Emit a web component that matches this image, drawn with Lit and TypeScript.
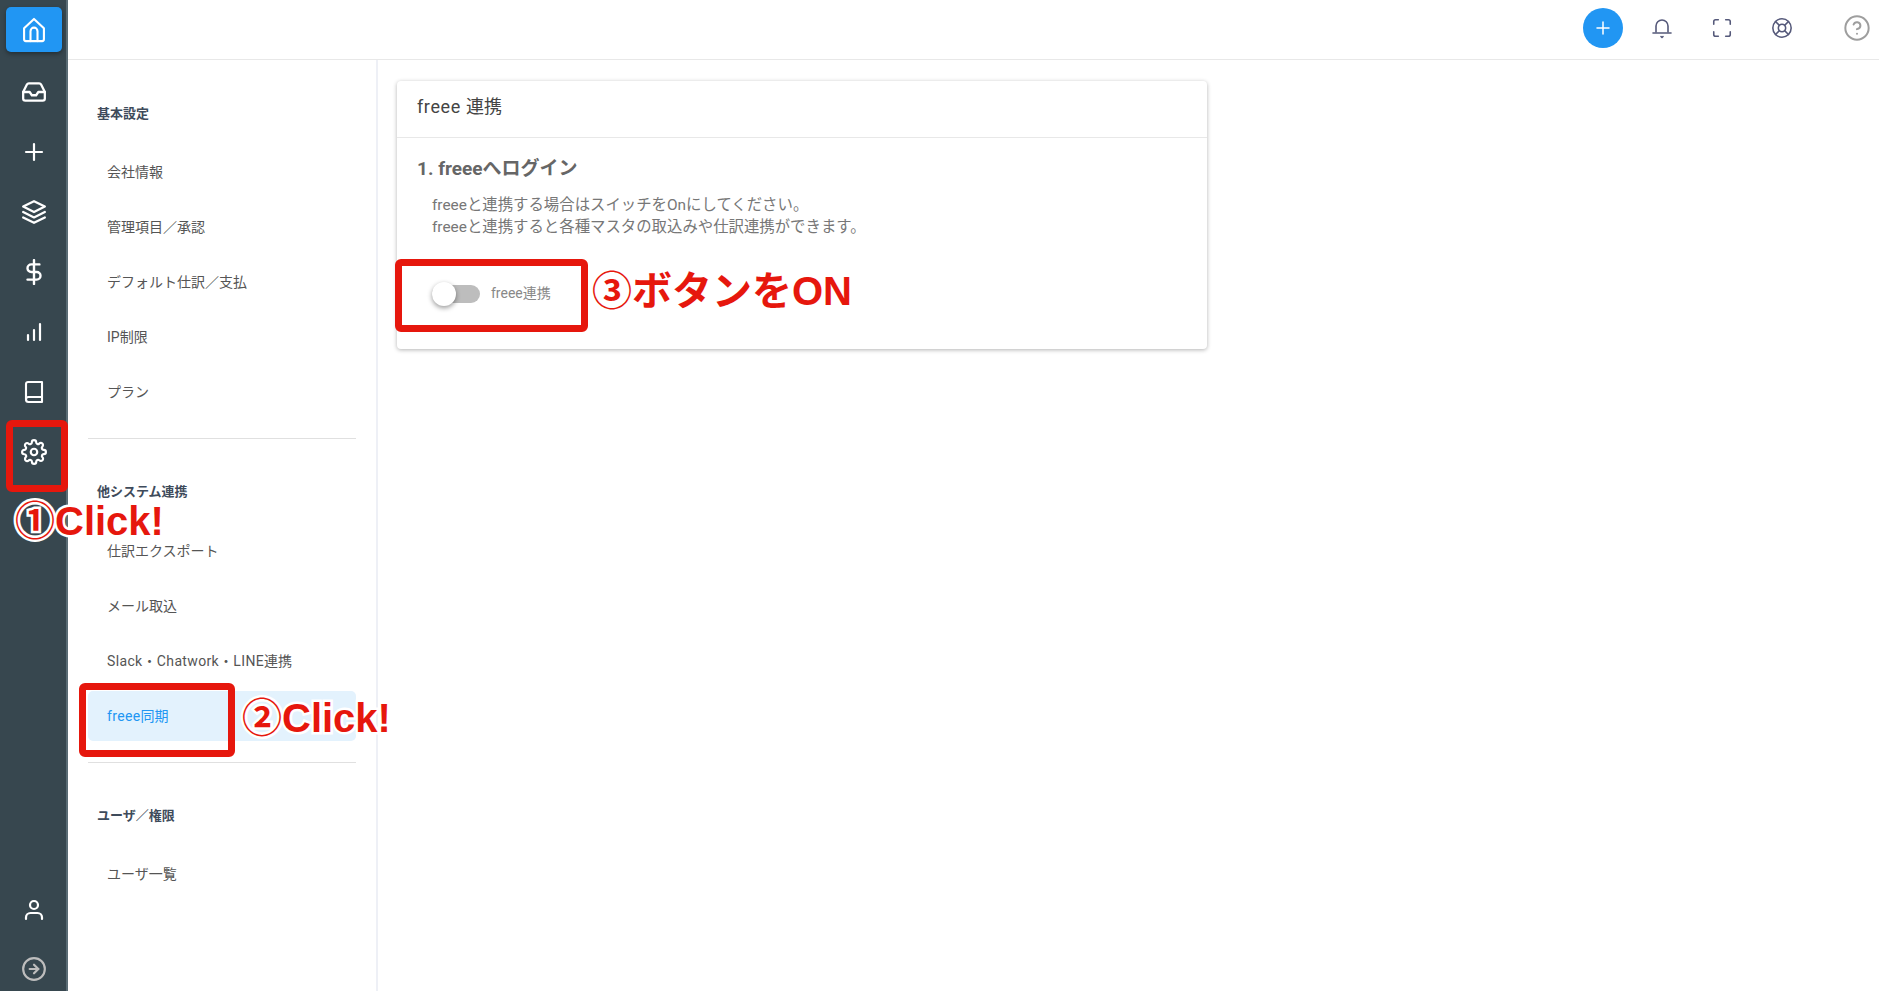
import { LitElement, html, css, svg } from "lit";
import { customElement } from "lit/decorators.js";

const icon = (body: unknown, size = 24, sw = 2) =>
  html`<svg width=${size} height=${size} viewBox="0 0 24 24" fill="none" stroke="currentColor" stroke-width=${sw} stroke-linecap="round" stroke-linejoin="round">${body}</svg>`;

const I = {
  home: svg`<path d="M3.5 10.5 12 2.500l8.500 8V20a1.500 1.500 0 0 1-1.500 1.500H5A1.500 1.500 0 0 1 3.500 20z"/><path d="M9 21.500V13a3 3 0 0 1 6 0v8.500"/>`,
  inbox: svg`<polyline points="22 12 16 12 14 15 10 15 8 12 2 12"/><path d="M5.45 5.11L2 12v6a2 2 0 0 0 2 2h16a2 2 0 0 0 2-2v-6l-3.45-6.89A2 2 0 0 0 16.76 4H7.24a2 2 0 0 0-1.79 1.11z"/>`,
  plus: svg`<line x1="12" y1="4" x2="12" y2="20"/><line x1="4" y1="12" x2="20" y2="12"/>`,
  layers: svg`<polygon points="12 2 2 7 12 12 22 7 12 2"/><polyline points="2 17 12 22 22 17"/><polyline points="2 12 12 17 22 12"/>`,
  dollar: svg`<line x1="12" y1="1" x2="12" y2="23"/><path d="M17 5H9.5a3.5 3.5 0 0 0 0 7h5a3.5 3.5 0 0 1 0 7H6"/>`,
  chart: svg`<line x1="18" y1="20" x2="18" y2="4"/><line x1="12" y1="20" x2="12" y2="10"/><line x1="6" y1="20" x2="6" y2="15"/>`,
  book: svg`<path d="M4 19.5V4a2 2 0 0 1 2-2h14v20H6.5A2.5 2.5 0 0 1 4 19.5z"/><path d="M4 19.5A2.5 2.5 0 0 1 6.5 17H20"/>`,
  gear: svg`<circle cx="12" cy="12" r="3"/><path d="M19.4 15a1.65 1.65 0 0 0 .33 1.82l.06.06a2 2 0 0 1 0 2.83 2 2 0 0 1-2.83 0l-.06-.06a1.65 1.65 0 0 0-1.82-.33 1.65 1.65 0 0 0-1 1.51V21a2 2 0 0 1-2 2 2 2 0 0 1-2-2v-.09A1.65 1.65 0 0 0 9 19.4a1.65 1.65 0 0 0-1.82.33l-.06.06a2 2 0 0 1-2.83 0 2 2 0 0 1 0-2.83l.06-.06a1.65 1.65 0 0 0 .33-1.82 1.65 1.65 0 0 0-1.51-1H3a2 2 0 0 1-2-2 2 2 0 0 1 2-2h.09A1.65 1.65 0 0 0 4.6 9a1.65 1.65 0 0 0-.33-1.82l-.06-.06a2 2 0 0 1 0-2.83 2 2 0 0 1 2.83 0l.06.06a1.65 1.65 0 0 0 1.82.33H9a1.65 1.65 0 0 0 1-1.51V3a2 2 0 0 1 2-2 2 2 0 0 1 2 2v.09a1.65 1.65 0 0 0 1 1.51 1.65 1.65 0 0 0 1.82-.33l.06-.06a2 2 0 0 1 2.83 0 2 2 0 0 1 0 2.83l-.06.06a1.65 1.65 0 0 0-.33 1.82V9a1.65 1.65 0 0 0 1.51 1H21a2 2 0 0 1 2 2 2 2 0 0 1-2 2h-.09a1.65 1.65 0 0 0-1.51 1z"/>`,
  user: svg`<circle cx="12" cy="7" r="4"/><path d="M4 21v-1.5A4.5 4.5 0 0 1 8.5 15h7a4.5 4.5 0 0 1 4.500 4.500V21"/>`,
  arrow: svg`<circle cx="12" cy="12" r="10"/><polyline points="12 16 16 12 12 8"/><line x1="8" y1="12" x2="16" y2="12"/>`,
  bell: svg`<path d="M18 16V10a6 6 0 0 0-12 0v6"/><line x1="3" y1="17" x2="21" y2="17"/><path d="M11 20.500 12 21.500l1-1"/>`,
  full: svg`<path d="M8 3H5a2 2 0 0 0-2 2v3"/><path d="M21 8V5a2 2 0 0 0-2-2h-3"/><path d="M3 16v3a2 2 0 0 0 2 2h3"/><path d="M16 21h3a2 2 0 0 0 2-2v-3"/>`,
  buoy: svg`<circle cx="12" cy="12" r="10"/><circle cx="12" cy="12" r="4"/><line x1="4.93" y1="4.93" x2="9.17" y2="9.17"/><line x1="14.83" y1="14.83" x2="19.07" y2="19.07"/><line x1="14.83" y1="9.17" x2="19.07" y2="4.93"/><line x1="4.93" y1="19.07" x2="9.17" y2="14.83"/>`,
  help: svg`<circle cx="12" cy="12" r="10"/><path d="M9.09 9a3 3 0 0 1 5.83 1c0 2-3 3-3 3"/><line x1="12" y1="17" x2="12.01" y2="17"/>`,
};

@customElement("app-root")
export class AppRoot extends LitElement {
  static styles = css`
    :host {
      display: block;
      position: relative;
      width: 1879px;
      height: 991px;
      overflow: hidden;
      background: #fff;
      font-family: Roboto, "Noto Sans CJK JP", sans-serif;
      color: #3e4b5b;
    }
    .layout { display: flex; height: 100%; }
    .rail {
      width: 66px;
      flex: none;
      border-right: 2px solid #5a6c75;
      background: #37474f;
      color: #fff;
      display: flex;
      flex-direction: column;
      align-items: stretch;
    }
    .rail-item { height: 60px; display: flex; align-items: center; justify-content: center; margin-left: 2px; }
    .rail-home {
      height: 45px;
      margin: 7px 0 10px 6px;
      width: 56px;
      background: #2196f3;
      border-radius: 5px;
      box-shadow: 0 2px 4px rgba(0, 0, 0, 0.35);
    }
    .rail-spacer { flex: 1; }
    .rail-last { height: 44px; margin-top: 7px; color: #bdbdbd; }
    .content { flex: 1; display: flex; flex-direction: column; min-width: 0; }
    .topbar {
      height: 59px;
      box-sizing: content-box;
      flex: none;
      border-bottom: 1px solid #e8e8e8;
      display: flex;
      align-items: flex-start;
      justify-content: flex-end;
      color: #55597a;
      padding-right: 8px;
    }
    .top-add {
      width: 40px; height: 40px; border-radius: 50%;
      background: #2196f3; color: #fff;
      display: flex; align-items: center; justify-content: center;
      margin: 8px 27px 0 0;
    }
    .top-icon {
      width: 24px; height: 24px;
      display: flex; align-items: center; justify-content: center;
      margin: 16px 36px 0 0;
    }
    .top-help { color: #9e9e9e; width: 28px; height: 28px; margin: 14px 0 0 13px; }
    .body { flex: 1; display: flex; min-height: 0; }
    .side {
      width: 310px;
      flex: none;
      box-sizing: border-box;
      border-right: 2px solid #eef0f6;
      padding: 39px 20px 0;
    }
    .heading {
      height: 30px;
      line-height: 30px;
      margin-left: 9px;
      font-size: 13px;
      font-weight: 700;
      color: #3e4b5b;
    }
    .items { margin-top: 18px; }
    .items.second { margin-top: 19px; }
    .item {
      height: 50px;
      margin: 5px 0;
      line-height: 50px;
      padding-left: 19px;
      font-size: 14px;
      color: #555;
      border-radius: 5px;
    }
    .item.active { background: #e3f2fd; color: #2196f3; }
    .lat { letter-spacing: 0.35px; }
    .sep { height: 1px; background: #e0e0e0; margin: 21px 0 38px; }
    .main { flex: 1; padding: 21px 19px; }
    .card {
      width: 810px;
      height: 268px;
      background: #fff;
      border-radius: 4px;
      box-shadow: 0 1px 4px rgba(0, 0, 0, 0.3);
    }
    .card-head {
      height: 57px;
      box-sizing: border-box;
      border-bottom: 1px solid #e8e8e8;
      padding-left: 20px;
      line-height: 52px;
      font-size: 18px;
      color: #444;
    }
    .card-head .lat { letter-spacing: 0.6px; }
    .card-body { padding: 19px 20px; }
    .card-body h3 {
      margin: 0;
      font-size: 19px;
      line-height: 24px;
      font-weight: 700;
      color: #666;
    }
    .desc {
      margin: 13px 0 0 15px;
      font-size: 15.4px;
      line-height: 22px;
      color: #777;
    }
    .toggle { display: flex; align-items: center; margin: 44px 0 0 15px; height: 24px; }
    .track { width: 48px; height: 18px; border-radius: 9px; background: #bdbdbd; position: relative; flex: none; }
    .thumb {
      position: absolute; left: 0; top: -3px;
      width: 24px; height: 24px; border-radius: 50%;
      background: #fff;
      box-shadow: 0 2px 5px rgba(0, 0, 0, 0.4);
    }
    .toggle-label { margin: 0 0 4px 11px; font-size: 14px; color: #888; }
    .box {
      position: absolute;
      box-sizing: border-box;
      border: 7px solid #e6170d;
      border-radius: 6px;
    }
    .note {
      position: absolute;
      font-family: "Liberation Sans", "Noto Sans CJK JP", sans-serif;
      font-weight: 700;
      font-size: 40px;
      line-height: 44px;
      color: #e6170d;
      white-space: nowrap;
      -webkit-text-stroke: 5px #fff;
      paint-order: stroke fill;
    }
    .n1 { left: 15px; top: 499px; }
    .n2 { left: 242px; top: 696px; }
    .n3 { left: 592px; top: 269px; }
    .b1 { left: 6px; top: 420px; width: 62px; height: 72px; }
    .b2 { left: 79px; top: 683px; width: 156px; height: 74px; }
    .b3 { left: 395px; top: 259px; width: 193px; height: 73px; }
  `;

  render() {
    return html`
      <div class="layout">
        <nav class="rail">
          <div class="rail-item rail-home">${icon(I.home, 28, 1.8)}</div>
          <div class="rail-item">${icon(I.inbox, 26, 2.1)}</div>
          <div class="rail-item">${icon(I.plus, 24, 2.2)}</div>
          <div class="rail-item">${icon(I.layers, 26, 2.1)}</div>
          <div class="rail-item">${icon(I.dollar, 26, 2.2)}</div>
          <div class="rail-item">${icon(I.chart, 24, 2.2)}</div>
          <div class="rail-item">${icon(I.book, 24, 2.1)}</div>
          <div class="rail-item">${icon(I.gear, 26, 2)}</div>
          <div class="rail-spacer"></div>
          <div class="rail-item">${icon(I.user, 24, 2.2)}</div>
          <div class="rail-item rail-last">${icon(I.arrow, 26)}</div>
        </nav>
        <div class="content">
          <header class="topbar">
            <div class="top-add">${icon(I.plus, 18)}</div>
            <div class="top-icon">${icon(I.bell, 24, 1.6)}</div>
            <div class="top-icon">${icon(I.full, 22, 1.7)}</div>
            <div class="top-icon">${icon(I.buoy, 22, 1.7)}</div>
            <div class="top-icon top-help">${icon(I.help, 28, 1.7)}</div>
          </header>
          <div class="body">
            <aside class="side">
              <div class="heading">基本設定</div>
              <div class="items">
                <div class="item">会社情報</div>
                <div class="item">管理項目／承認</div>
                <div class="item">デフォルト仕訳／支払</div>
                <div class="item">IP制限</div>
                <div class="item">プラン</div>
              </div>
              <div class="sep"></div>
              <div class="heading">他システム連携</div>
              <div class="items second">
                <div class="item">仕訳エクスポート</div>
                <div class="item">メール取込</div>
                <div class="item"><span class="lat">Slack・Chatwork・LINE</span>連携</div>
                <div class="item active"><span class="lat">freee</span>同期</div>
              </div>
              <div class="sep"></div>
              <div class="heading">ユーザ／権限</div>
              <div class="items">
                <div class="item">ユーザ一覧</div>
              </div>
            </aside>
            <main class="main">
              <section class="card">
                <div class="card-head"><span class="lat">freee </span>連携</div>
                <div class="card-body">
                  <h3>1. freeeへログイン</h3>
                  <p class="desc">freeeと連携する場合はスイッチをOnにしてください。<br />freeeと連携すると各種マスタの取込みや仕訳連携ができます。</p>
                  <div class="toggle">
                    <div class="track"><div class="thumb"></div></div>
                    <span class="toggle-label">freee連携</span>
                  </div>
                </div>
              </section>
            </main>
          </div>
        </div>
      </div>
      <div class="box b1"></div>
      <div class="box b2"></div>
      <div class="box b3"></div>
      <div class="note n1">①Click!</div>
      <div class="note n2">②Click!</div>
      <div class="note n3">③ボタンをON</div>
    `;
  }
}
